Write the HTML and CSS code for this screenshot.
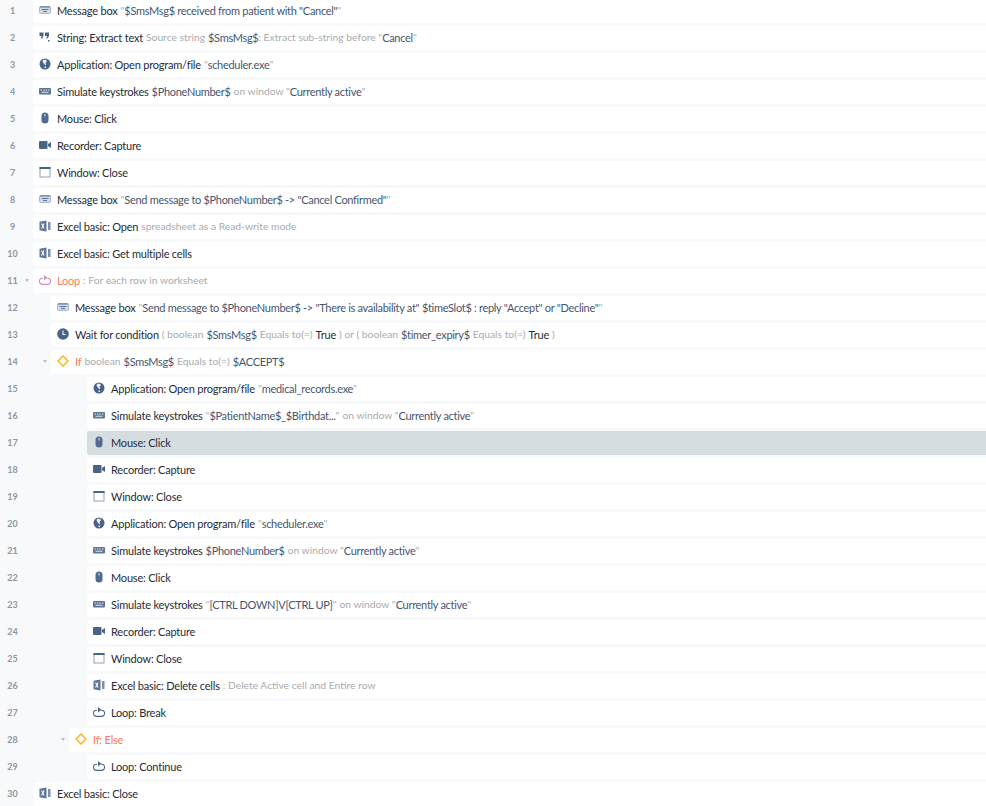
FILE: index.html
```html
<!DOCTYPE html>
<html lang="en">

<head>
  <meta charset="UTF-8">
  <title>Workflow steps</title>
  <link rel="stylesheet" href="styles.css">
</head>

<body>
  <svg class="defs" width="0" height="0">
    <symbol id="i-msg" viewBox="0 0 12 12"><rect x=".5" y="2.500" width="11" height="7" rx="1" fill="#d3dbe6" stroke="#a9b8cc"/><path d="M1 2.500h10v1H1zM2.500 5h7v1h-7zM4 7h4v1H4z" fill="#5d7596"/></symbol>
    <symbol id="i-quote" viewBox="0 0 12 12"><path d="M.5 1.500h4v3.500L3 7.500H1.800l.8-2.500H.5zM6 1.500h4V5L8.500 7.500H7.300l.8-2.500H6zM9 9h1.500v1.500H9z" fill="#4a6488"/></symbol>
    <symbol id="i-app" viewBox="0 0 12 12"><circle cx="6" cy="6" r="5.500" fill="#4a6488"/><path d="M4.300 1.800h3l.5 1.700L6.500 5l.7 1.500-1 .8-1.700-2.300-1-1.500zM5.500 8.500h1.500V10H5.500z" fill="#eef1f5"/></symbol>
    <symbol id="i-keys" viewBox="0 0 12 12"><rect y="3" width="12" height="6.500" rx="1" fill="#5d7596"/><path d="M1.500 4.500h1.500v1H1.500zM4 4.500h1.500v1H4zM6.500 4.500H8v1H6.500zM9 4.500h1.500v1H9zM2.500 6.800h7v1h-7z" fill="#dfe5ec"/></symbol>
    <symbol id="i-mouse" viewBox="0 0 12 12"><rect x="2.500" y=".5" width="7" height="11" rx="3.500" fill="#4f6a8e"/><path d="M5.500 2h1v2.500h-1z" fill="#dfe5ec"/></symbol>
    <symbol id="i-rec" viewBox="0 0 12 12"><rect y="2" width="8.500" height="8" rx="1" fill="#4a6488"/><path d="M9 5l3-2v6L9 7z" fill="#4a6488"/></symbol>
    <symbol id="i-win" viewBox="0 0 12 12"><rect x="1" y="1.500" width="10" height="9.500" fill="#fff" stroke="#8ea0b7"/><rect x=".5" y="1" width="11" height="2" fill="#4a6488"/></symbol>
    <symbol id="i-xls" viewBox="0 0 12 12"><path d="M.5 1.800L7.500 .5v11L.5 10.200z" fill="#5d7596"/><path d="M2 3.500h1.200L3.800 5l.6-1.500h1.200L4.500 6l1.100 2.500H4.400L3.800 7l-.6 1.500H2L3.100 6z" fill="#fff"/><path d="M9 2h2.500v8H9z" fill="#7b8fa8"/></symbol>
    <symbol id="i-loop" viewBox="0 0 12 12"><path d="M4 4.200H3.500a3.100 3.100 0 0 0 0 6.200h5a3.100 3.100 0 0 0 0-6.200H8" fill="none" stroke="currentColor" stroke-width="1.100"/><path d="M5 1v5.500l3.300-2.700z" fill="currentColor"/></symbol>
    <symbol id="i-clock" viewBox="0 0 12 12"><circle cx="6" cy="6" r="5.800" fill="#4a6488"/><path d="M5.500 2.500h1V6h2v1h-3z" fill="#fff"/></symbol>
    <symbol id="i-if" viewBox="0 0 12 12"><path d="M6 1l5 5-5 5-5-5z" fill="none" stroke="#ffb31a" stroke-width="1.500"/></symbol>
  </svg>

  <div class="steps">
    <div class="line"><span class="num">1</span><span class="gutter"></span><div class="row"><svg class="icon"><use href="#i-msg"/></svg><span class="t">Message box</span><span class="m">"</span><span class="v tight">$SmsMsg$ received from patient with "Cancel"</span><span class="m tight">"</span></div></div>
    <div class="line"><span class="num">2</span><span class="gutter"></span><div class="row"><svg class="icon"><use href="#i-quote"/></svg><span class="t">String: Extract text</span><span class="m">Source string</span><span class="v">$SmsMsg$</span><span class="m tight">: Extract sub-string before "</span><span class="v tight">Cancel</span><span class="m tight">"</span></div></div>
    <div class="line"><span class="num">3</span><span class="gutter"></span><div class="row"><svg class="icon"><use href="#i-app"/></svg><span class="t">Application: Open program/file</span><span class="m">"</span><span class="v tight">scheduler.exe</span><span class="m tight">"</span></div></div>
    <div class="line"><span class="num">4</span><span class="gutter"></span><div class="row"><svg class="icon"><use href="#i-keys"/></svg><span class="t">Simulate keystrokes</span><span class="v">$PhoneNumber$</span><span class="m">on window "</span><span class="v tight">Currently active</span><span class="m tight">"</span></div></div>
    <div class="line"><span class="num">5</span><span class="gutter"></span><div class="row"><svg class="icon"><use href="#i-mouse"/></svg><span class="t">Mouse: Click</span></div></div>
    <div class="line"><span class="num">6</span><span class="gutter"></span><div class="row"><svg class="icon"><use href="#i-rec"/></svg><span class="t">Recorder: Capture</span></div></div>
    <div class="line"><span class="num">7</span><span class="gutter"></span><div class="row"><svg class="icon"><use href="#i-win"/></svg><span class="t">Window: Close</span></div></div>
    <div class="line"><span class="num">8</span><span class="gutter"></span><div class="row"><svg class="icon"><use href="#i-msg"/></svg><span class="t">Message box</span><span class="m">"</span><span class="v tight">Send message to $PhoneNumber$ -&gt; "Cancel Confirmed"</span><span class="m tight">"</span></div></div>
    <div class="line"><span class="num">9</span><span class="gutter"></span><div class="row"><svg class="icon"><use href="#i-xls"/></svg><span class="t">Excel basic: Open</span><span class="m">spreadsheet as a Read-write mode</span></div></div>
    <div class="line"><span class="num">10</span><span class="gutter"></span><div class="row"><svg class="icon"><use href="#i-xls"/></svg><span class="t">Excel basic: Get multiple cells</span></div></div>
    <div class="line"><span class="num">11</span><span class="gutter"><i class="caret"></i></span><div class="row"><svg class="icon loop-open"><use href="#i-loop"/></svg><span class="t open">Loop</span><span class="m">: For each row in worksheet</span></div></div>
    <div class="line"><span class="num">12</span><span class="gutter lv1"></span><div class="row"><svg class="icon"><use href="#i-msg"/></svg><span class="t">Message box</span><span class="m">"</span><span class="v tight">Send message to $PhoneNumber$ -&gt; "There is availability at" $timeSlot$ : reply "Accept" or "Decline"</span><span class="m tight">"</span></div></div>
    <div class="line"><span class="num">13</span><span class="gutter lv1"></span><div class="row"><svg class="icon"><use href="#i-clock"/></svg><span class="t">Wait for condition</span><span class="m">( boolean</span><span class="v">$SmsMsg$</span><span class="m">Equals to(=)</span><span class="t gap">True</span><span class="m">) or ( boolean</span><span class="v">$timer_expiry$</span><span class="m">Equals to(=)</span><span class="t gap">True</span><span class="m">)</span></div></div>
    <div class="line"><span class="num">14</span><span class="gutter lv1"><i class="caret"></i></span><div class="row"><svg class="icon"><use href="#i-if"/></svg><span class="t open">If</span><span class="m">boolean</span><span class="v">$SmsMsg$</span><span class="m">Equals to(=)</span><span class="v">$ACCEPT$</span></div></div>
    <div class="line"><span class="num">15</span><span class="gutter lv3"></span><div class="row"><svg class="icon"><use href="#i-app"/></svg><span class="t">Application: Open program/file</span><span class="m">"</span><span class="v tight">medical_records.exe</span><span class="m tight">"</span></div></div>
    <div class="line"><span class="num">16</span><span class="gutter lv3"></span><div class="row"><svg class="icon"><use href="#i-keys"/></svg><span class="t">Simulate keystrokes</span><span class="m">"</span><span class="v tight">$PatientName$_$Birthdat...</span><span class="m tight">"</span><span class="m">on window "</span><span class="v tight">Currently active</span><span class="m tight">"</span></div></div>
    <div class="line"><span class="num">17</span><span class="gutter lv3"></span><div class="row selected"><svg class="icon"><use href="#i-mouse"/></svg><span class="t">Mouse: Click</span></div></div>
    <div class="line"><span class="num">18</span><span class="gutter lv3"></span><div class="row"><svg class="icon"><use href="#i-rec"/></svg><span class="t">Recorder: Capture</span></div></div>
    <div class="line"><span class="num">19</span><span class="gutter lv3"></span><div class="row"><svg class="icon"><use href="#i-win"/></svg><span class="t">Window: Close</span></div></div>
    <div class="line"><span class="num">20</span><span class="gutter lv3"></span><div class="row"><svg class="icon"><use href="#i-app"/></svg><span class="t">Application: Open program/file</span><span class="m">"</span><span class="v tight">scheduler.exe</span><span class="m tight">"</span></div></div>
    <div class="line"><span class="num">21</span><span class="gutter lv3"></span><div class="row"><svg class="icon"><use href="#i-keys"/></svg><span class="t">Simulate keystrokes</span><span class="v">$PhoneNumber$</span><span class="m">on window "</span><span class="v tight">Currently active</span><span class="m tight">"</span></div></div>
    <div class="line"><span class="num">22</span><span class="gutter lv3"></span><div class="row"><svg class="icon"><use href="#i-mouse"/></svg><span class="t">Mouse: Click</span></div></div>
    <div class="line"><span class="num">23</span><span class="gutter lv3"></span><div class="row"><svg class="icon"><use href="#i-keys"/></svg><span class="t">Simulate keystrokes</span><span class="m">"</span><span class="v tight">[CTRL DOWN]V[CTRL UP]</span><span class="m tight">"</span><span class="m">on window "</span><span class="v tight">Currently active</span><span class="m tight">"</span></div></div>
    <div class="line"><span class="num">24</span><span class="gutter lv3"></span><div class="row"><svg class="icon"><use href="#i-rec"/></svg><span class="t">Recorder: Capture</span></div></div>
    <div class="line"><span class="num">25</span><span class="gutter lv3"></span><div class="row"><svg class="icon"><use href="#i-win"/></svg><span class="t">Window: Close</span></div></div>
    <div class="line"><span class="num">26</span><span class="gutter lv3"></span><div class="row"><svg class="icon"><use href="#i-xls"/></svg><span class="t">Excel basic: Delete cells</span><span class="m">: Delete Active cell and Entire row</span></div></div>
    <div class="line"><span class="num">27</span><span class="gutter lv3"></span><div class="row"><svg class="icon loop"><use href="#i-loop"/></svg><span class="t">Loop: Break</span></div></div>
    <div class="line"><span class="num">28</span><span class="gutter lv2"><i class="caret"></i></span><div class="row"><svg class="icon"><use href="#i-if"/></svg><span class="t open">If: Else</span></div></div>
    <div class="line"><span class="num">29</span><span class="gutter lv3"></span><div class="row"><svg class="icon loop"><use href="#i-loop"/></svg><span class="t">Loop: Continue</span></div></div>
    <div class="line"><span class="num">30</span><span class="gutter"></span><div class="row"><svg class="icon"><use href="#i-xls"/></svg><span class="t">Excel basic: Close</span></div></div>
  </div>
</body>

</html>
```

FILE: styles.css
```css
html,
body {
  height: 100%;
  overflow: hidden;
}

body {
  margin: 0;
  background-color: #f7f9fb;
  font-family: Lato, "Open Sans", sans-serif;
  font-size: 11px;
  letter-spacing: -0.2px;
  color: #252c38;
}

.defs {
  display: block;
  height: 0;
}

.steps {
  display: flex;
  flex-direction: column;
  gap: 3px;
  margin-top: -1px;
}

.line {
  display: flex;
  align-items: center;
  height: 24px;
}

.num {
  width: 25px;
  padding-bottom: 2px;
  text-align: center;
  font-size: 9px;
  font-weight: 700;
  letter-spacing: 0;
  color: #8d98a3;
}

.gutter {
  display: flex;
  justify-content: flex-end;
  align-items: center;
  flex: none;
  width: 8px;
  padding-right: 4px;
  padding-bottom: 2px;
  box-sizing: border-box;
}

.lv1 {
  width: 26px;
}

.lv2 {
  width: 44px;
}

.lv3 {
  width: 62px;
}

.caret {
  width: 0;
  height: 0;
  border-left: 2.5px solid transparent;
  border-right: 2.5px solid transparent;
  border-top: 3px solid #b5bcc4;
}

.row {
  display: flex;
  align-items: center;
  flex: 1;
  box-sizing: border-box;
  height: 24px;
  padding-left: 6px;
  padding-bottom: 2px;
  background: white;
  border-radius: 3px 0 0 3px;
  white-space: pre;
}

.selected {
  background: #d6dde1;
}

.icon {
  flex: none;
  width: 12px;
  height: 12px;
  margin-right: 6px;
}

.loop {
  color: #4a6488;
}

.loop-open {
  color: #c78fc5;
}

.open {
  color: #ff7a59;
}

.gap {
  margin-left: 3px;
}

.m {
  margin-left: 3px;
  font-size: 10.3px;
  letter-spacing: 0;
  color: #a9abae;
}

.v {
  margin-left: 3px;
  letter-spacing: -0.3px;
  color: #47566f;
}

.tight {
  margin-left: 0;
}
```
